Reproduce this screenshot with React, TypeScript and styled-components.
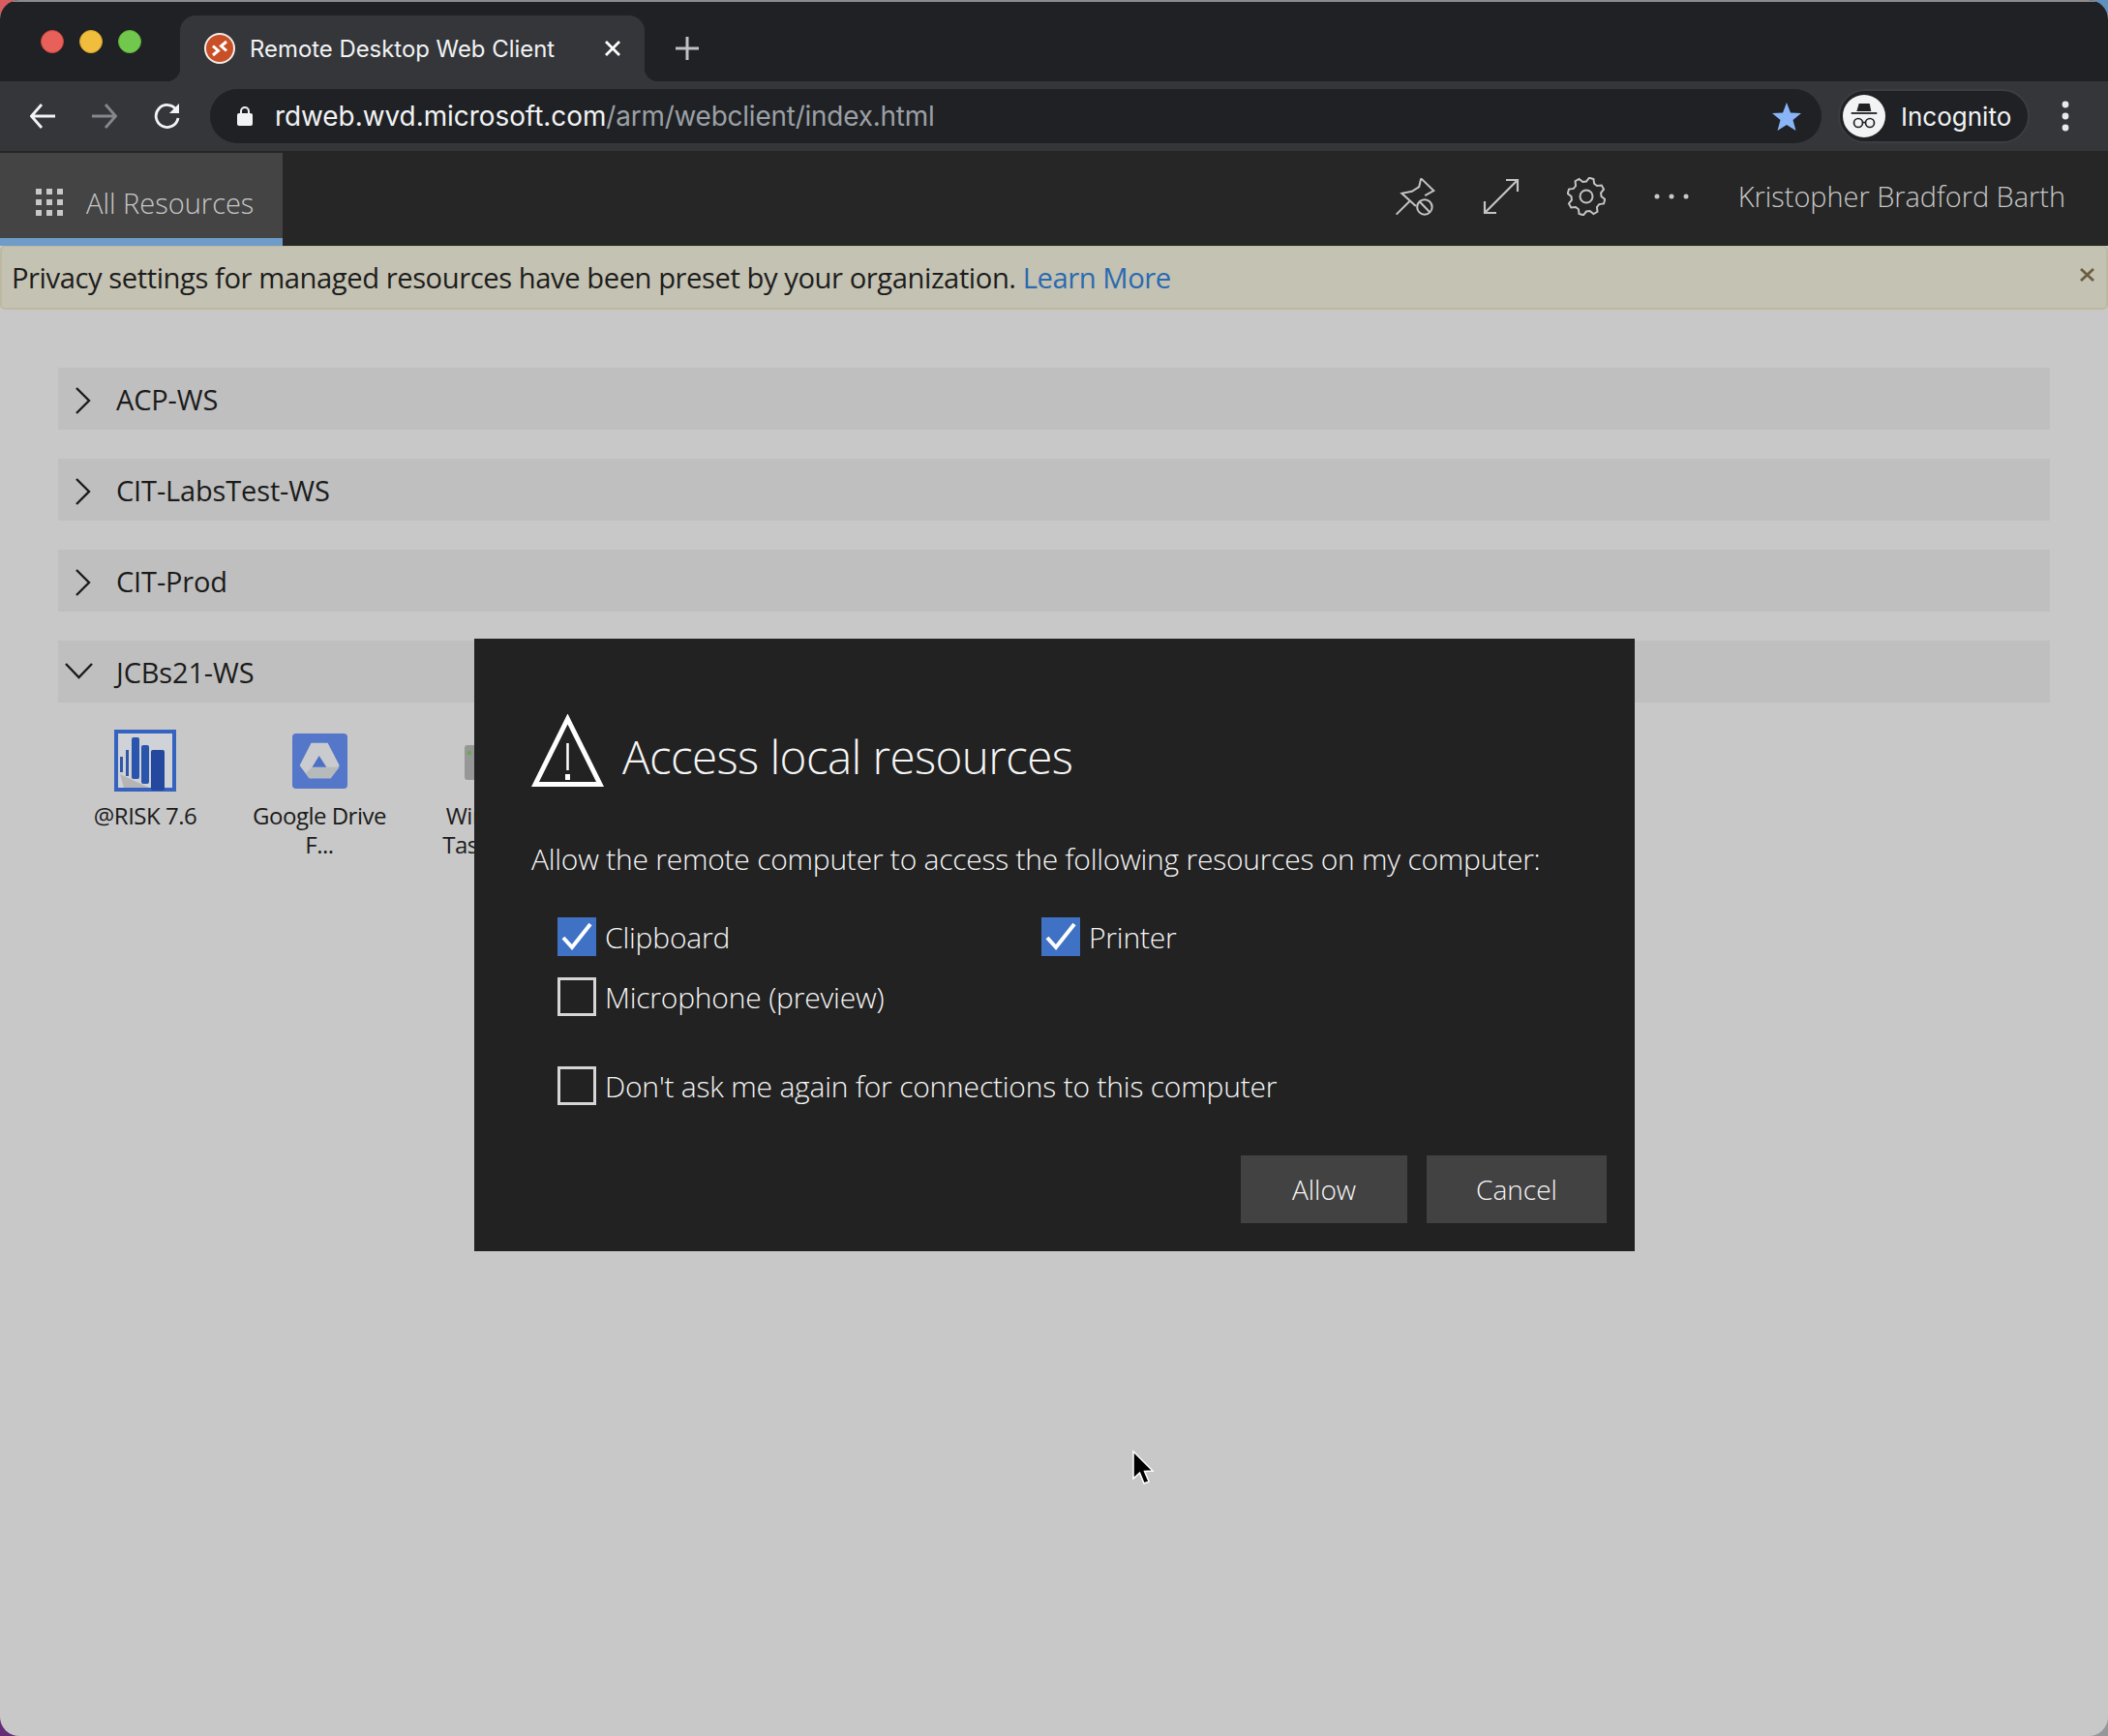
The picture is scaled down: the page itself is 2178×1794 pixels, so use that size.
import React from 'react';
import styled, { createGlobalStyle } from 'styled-components';

const Global = createGlobalStyle`
  html, body { margin: 0; padding: 0; width: 2178px; height: 1794px; overflow: hidden; }
  body { background: conic-gradient(from 45deg at 50% 50%, #5b8fc0 0deg, #999 90deg, #5e2a78 180deg, #e0605c 270deg, #5b8fc0 360deg); }
  * { box-sizing: border-box; }
`;

const segoe = `"Open Sans", "Noto Sans", sans-serif`;
const chrome = `Inter, Roboto, "Liberation Sans", sans-serif`;

const Window = styled.div`
  position: relative;
  width: 2178px;
  height: 1794px;
  border-radius: 20px;
  overflow: hidden;
  background: #c8c8c8;
  display: flex;
  flex-direction: column;
  font-family: ${segoe};
`;
const TitleBar = styled.div`
  height: 84px;
  flex: none;
  background: #202124;
  border-top: 2px solid #8b8b8d;
  display: flex;
  align-items: flex-end;
  padding-left: 42px;
`;
const Lights = styled.div`
  display: flex;
  gap: 16px;
  align-self: flex-start;
  margin-top: 29px;
  width: 144px;
`;
const Light = styled.span<{ $c: string; $e: string }>`
  width: 24px;
  height: 24px;
  border-radius: 50%;
  background: ${p => p.$c};
  border: 1px solid ${p => p.$e};
`;
const Tab = styled.div`
  position: relative;
  width: 480px;
  height: 68px;
  background: #35363a;
  border-radius: 16px 16px 0 0;
  display: flex;
  align-items: center;
  padding: 0 24px 0 25px;
  color: #f1f3f4;
  font-family: ${chrome};
  font-size: 23.9px;
  &::before, &::after {
    content: '';
    position: absolute;
    bottom: 0;
    width: 14px;
    height: 14px;
  }
  &::before { left: -14px; background: radial-gradient(circle at 0 0, transparent 14px, #35363a 14.5px); }
  &::after { right: -14px; background: radial-gradient(circle at 100% 0, transparent 14px, #35363a 14.5px); }
`;
const TabTitle = styled.span`
  margin-left: 15px;
  flex: 1;
  white-space: nowrap;
`;
const NewTab = styled.svg`
  align-self: center;
  margin: 14px 0 0 32px;
`;
const Toolbar = styled.div`
  height: 72px;
  flex: none;
  background: #35363a;
  display: flex;
  align-items: center;
  padding-left: 31px;
`;
const NavIcon = styled.svg<{ $gap: number }>`
  flex: none;
  margin-right: ${p => p.$gap}px;
`;
const Omnibox = styled.div`
  width: 1665px;
  height: 56px;
  border-radius: 28px;
  background: #202124;
  display: flex;
  align-items: center;
  padding: 0 21px 0 27px;
  font-family: ${chrome};
  font-size: 27.9px;
`;
const Host = styled.span`
  color: #f1f3f4;
  margin-left: 22px;
  letter-spacing: -0.02px;
`;
const UrlPath = styled.span`
  color: #9aa0a6;
  flex: 1;
  letter-spacing: -0.2px;
`;
const Profile = styled.div`
  margin-left: 17px;
  width: 198px;
  height: 56px;
  border-radius: 28px;
  background: #202124;
  border: 2px solid #3c3d42;
  display: flex;
  align-items: center;
  padding-left: 3px;
  gap: 16px;
  color: #f1f3f4;
  font-family: ${chrome};
  font-size: 26px;
`;
const Kebab = styled.svg`
  margin-left: 33px;
`;
const AppHeader = styled.header`
  height: 98px;
  flex: none;
  background: #262626;
  display: flex;
  align-items: flex-end;
  padding-right: 44px;
`;
const ResourcesTab = styled.div`
  width: 292px;
  height: 96px;
  background: #444444;
  border-bottom: 8px solid #6f9bc8;
  display: flex;
  align-items: center;
  padding: 14px 0 0 37px;
  gap: 24px;
  color: #c8c8c8;
  font-size: 29px;
  font-weight: 300;
`;
const HeaderRight = styled.div`
  margin-left: auto;
  align-self: center;
  display: flex;
  align-items: center;
  color: #c8c8c8;
  font-size: 28.9px;
  font-weight: 300;
  margin-top: -5px;
`;
const UserName = styled.span`
  margin-left: 51px;
  white-space: nowrap;
`;
const HeaderIcon = styled.svg<{ $gap: number }>`
  flex: none;
  margin-right: ${p => p.$gap}px;
`;
const Banner = styled.div`
  height: 66px;
  flex: none;
  background: #c4c2b2;
  border: 2px solid #bdb9a0;
  border-top-width: 1px;
  border-radius: 5px;
  display: flex;
  align-items: center;
  padding: 0 12px 0 10px;
  font-size: 29.2px;
  font-weight: 400;
  color: #1d1d1d;
`;
const BannerText = styled.span`
  flex: 1;
  letter-spacing: -0.44px;
`;
const LearnMore = styled.span`
  color: #2a6ab0;
`;
const CloseGlyph = styled.svg`
  margin-top: -6px;
`;
const Content = styled.main`
  padding: 60px 60px 0;
  display: flex;
  flex-direction: column;
  gap: 30px;
`;
const GroupHeader = styled.div`
  height: 64px;
  background: #bfbfbf;
  display: flex;
  align-items: center;
  color: #1b1b1b;
  font-size: 29px;
  font-weight: 400;
  letter-spacing: ${'-0.15px'};
`;
const Chevron = styled.svg`
  width: 60px;
  flex: none;
  margin-top: 3px;
`;
const AppGrid = styled.div`
  display: flex;
  margin-top: -2px;
`;
const AppItem = styled.div`
  width: 180px;
  display: flex;
  flex-direction: column;
  align-items: center;
`;
const AppIconBox = styled.div`
  height: 64px;
  display: flex;
  align-items: center;
  justify-content: center;
`;
const AppLabel = styled.div`
  margin-top: 10px;
  width: 160px;
  text-align: center;
  font-size: 24px;
  line-height: 30px;
  color: #1b1b1b;
  letter-spacing: -0.5px;
`;
const Dialog = styled.div`
  position: absolute;
  left: 490px;
  top: 660px;
  width: 1199px;
  height: 633px;
  background: #222222;
  padding: 78px 29px 0 59px;
  color: #f6f6f6;
  display: flex;
  flex-direction: column;
`;
const DialogTitleRow = styled.div`
  display: flex;
  align-items: center;
  gap: 19px;
  height: 75px;
`;
const DialogTitle = styled.h2`
  margin: 0;
  padding-top: 11px;
  font-size: 47.6px;
  font-weight: 350;
  letter-spacing: -0.6px;
`;
const DialogText = styled.p`
  margin: 55px 0 0;
  line-height: 40px;
  font-size: 30px;
  font-weight: 350;
  letter-spacing: -0.24px;
  white-space: nowrap;
`;
const Options = styled.div`
  margin: 40px 0 0 27px;
  display: grid;
  grid-template-columns: 500px 1fr;
  row-gap: 22px;
`;
const Option = styled.label<{ $top?: number }>`
  display: flex;
  align-items: center;
  gap: 9px;
  height: 40px;
  font-size: 30px;
  font-weight: 350;
  letter-spacing: -0.2px;
  white-space: nowrap;
  ${p => (p.$top ? `margin: ${p.$top}px 0 0 27px;` : '')}
`;
const Box = styled.span<{ $on?: boolean }>`
  width: 40px;
  height: 40px;
  flex: none;
  display: flex;
  align-items: center;
  justify-content: center;
  background: ${p => (p.$on ? '#3f72c4' : 'transparent')};
  border: ${p => (p.$on ? 'none' : '3px solid #d6d6d6')};
`;
const Actions = styled.div`
  margin-top: 52px;
  display: flex;
  justify-content: flex-end;
  gap: 20px;
`;
const Button = styled.button<{ $w: number }>`
  width: ${p => p.$w}px;
  height: 70px;
  border: none;
  background: #424242;
  color: #f6f6f6;
  font-family: ${segoe};
  font-size: 28px;
  font-weight: 350;
`;
const Cursor = styled.svg`
  position: absolute;
  left: 1168px;
  top: 1498px;
`;

const gearPath = (() => {
  const pts: string[] = [];
  const n = 8;
  for (let i = 0; i < n; i++) {
    const a = (i / n) * Math.PI * 2 + Math.PI / 8;
    const step = (Math.PI * 2) / n;
    [[15.5, -0.5], [19.5, -0.3], [19.5, 0.0], [15.5, 0.2]].forEach(([r, f]) => {
      const t = a + f * step;
      pts.push(`${(20 + r * Math.cos(t)).toFixed(2)} ${(20 + r * Math.sin(t)).toFixed(2)}`);
    });
  }
  return 'M' + pts.join('L') + 'Z';
})();

const ChevronRight = () => (
  <Chevron height="32" viewBox="0 0 60 32">
    <path d="M19 3L32 16L19 29" fill="none" stroke="#1b1b1b" strokeWidth="2.4" />
  </Chevron>
);
const ChevronDown = () => (
  <Chevron height="32" viewBox="0 0 60 32">
    <path d="M8 6L21.500 20L35 6" fill="none" stroke="#1b1b1b" strokeWidth="2.4" />
  </Chevron>
);
const Check = () => (
  <svg width="34" height="30" viewBox="0 0 34 30">
    <path d="M3 16L12 26L31 2" fill="none" stroke="#fff" strokeWidth="4" />
  </svg>
);

const groups = ['ACP-WS', 'CIT-LabsTest-WS', 'CIT-Prod'];

export default function App() {
  return (
    <>
      <Global />
      <Window>
        <TitleBar>
          <Lights>
            <Light $c="#e8605a" $e="#c9453f" />
            <Light $c="#f0bd3d" $e="#d7a12c" />
            <Light $c="#72c84c" $e="#5fb13c" />
          </Lights>
          <Tab>
            <svg width="32" height="32" viewBox="0 0 32 32">
              <circle cx="16" cy="16" r="15" fill="#c94f27" stroke="#f3ece8" strokeWidth="2" />
              <path d="M9 13.500L14.500 18.500L9 23M23 9L17.500 13.500L23 18.500" fill="none" stroke="#fff" strokeWidth="3" />
            </svg>
            <TabTitle>Remote Desktop Web Client</TabTitle>
            <svg width="18" height="16" viewBox="0 0 18 16">
              <path d="M2 1L16 15M16 1L2 15" stroke="#fff" strokeWidth="2.800" />
            </svg>
          </Tab>
          <NewTab width="24" height="24" viewBox="0 0 24 24">
            <path d="M12 0V24M0 12H24" stroke="#bdc1c6" strokeWidth="3" />
          </NewTab>
        </TitleBar>
        <Toolbar>
          <NavIcon $gap={38} width="26" height="26" viewBox="0 0 26 26">
            <path d="M12 1L1.500 13L12 25M2 13H26" fill="none" stroke="#f1f3f4" strokeWidth="2.800" />
          </NavIcon>
          <NavIcon $gap={38} width="26" height="26" viewBox="0 0 26 26">
            <path d="M14 1L24.500 13L14 25M24 13H0" fill="none" stroke="#84878b" strokeWidth="2.800" />
          </NavIcon>
          <NavIcon $gap={30} width="28" height="28" viewBox="0 0 28 28">
            <path d="M23.500 8A11.500 11.500 0 1 0 25 16" fill="none" stroke="#f1f3f4" strokeWidth="2.800" />
            <path d="M26 1V11H16Z" fill="#f1f3f4" />
          </NavIcon>
          <Omnibox>
            <svg width="18" height="22" viewBox="0 0 18 22">
              <path d="M5 9V6a4 4 0 0 1 8 0V9" fill="none" stroke="#f1f3f4" strokeWidth="2" />
              <rect x="1" y="8" width="16" height="13" rx="2" fill="#f1f3f4" />
            </svg>
            <Host>rdweb.wvd.microsoft.com</Host>
            <UrlPath>/arm/webclient/index.html</UrlPath>
            <svg width="30" height="29" viewBox="0 0 30 29">
              <path d="M15 0L19 10.500L30 11L21.500 18L24.500 29L15 23L5.500 29L8.500 18L0 11L11 10.500Z" fill="#8ab4f8" />
            </svg>
          </Omnibox>
          <Profile>
            <svg width="44" height="44" viewBox="0 0 44 44">
              <circle cx="22" cy="22" r="22" fill="#f1f3f4" />
              <path d="M16.700 9H27.700L29.300 17H14.300Z" fill="#202124" />
              <path d="M8.700 19H35.300" stroke="#202124" strokeWidth="1.800" />
              <circle cx="16" cy="29" r="4.500" fill="none" stroke="#202124" strokeWidth="1.700" />
              <circle cx="28" cy="29" r="4.500" fill="none" stroke="#202124" strokeWidth="1.700" />
              <path d="M20.500 28.500H23.500" stroke="#202124" strokeWidth="1.500" />
            </svg>
            Incognito
          </Profile>
          <Kebab width="8" height="32" viewBox="0 0 8 32">
            <circle cx="4" cy="4" r="3.400" fill="#e8eaed" />
            <circle cx="4" cy="16" r="3.400" fill="#e8eaed" />
            <circle cx="4" cy="28" r="3.400" fill="#e8eaed" />
          </Kebab>
        </Toolbar>
        <AppHeader>
          <ResourcesTab>
            <svg width="28" height="28" viewBox="0 0 28 28">
              {[0, 11, 22].flatMap(y =>
                [0, 11, 22].map(x => <rect key={`${x}-${y}`} x={x} y={y} width="6" height="6" fill="#c8c8c8" />)
              )}
            </svg>
            All Resources
          </ResourcesTab>
          <HeaderRight>
            <HeaderIcon $gap={49} width="42" height="42" viewBox="35 35 125 125">
              <path d="M116 42L155 80L128 95M116 42L110 68L88 82L57 88L100 127M40 153L80 113" fill="none" stroke="#c4c4c4" strokeWidth="6" />
              <circle cx="127" cy="130" r="23" fill="none" stroke="#c4c4c4" strokeWidth="6" />
              <path d="M112 114L143 146" stroke="#c4c4c4" strokeWidth="6" />
            </HeaderIcon>
            <HeaderIcon $gap={49} width="38" height="38" viewBox="0 0 38 38">
              <path d="M2 36L36 2M24 2H36V14M2 24V36H14" fill="none" stroke="#c4c4c4" strokeWidth="2.200" />
            </HeaderIcon>
            <HeaderIcon $gap={50} width="40" height="40" viewBox="0 0 40 40">
              <path d={gearPath} fill="none" stroke="#c4c4c4" strokeWidth="2" />
              <circle cx="20" cy="20" r="6.500" fill="none" stroke="#c4c4c4" strokeWidth="2" />
            </HeaderIcon>
            <svg width="36" height="6" viewBox="0 0 36 6">
              <circle cx="3" cy="3" r="2.500" fill="#c8c8c8" />
              <circle cx="18" cy="3" r="2.500" fill="#c8c8c8" />
              <circle cx="33" cy="3" r="2.500" fill="#c8c8c8" />
            </svg>
            <UserName>Kristopher Bradford Barth</UserName>
          </HeaderRight>
        </AppHeader>
        <Banner>
          <BannerText>
            Privacy settings for managed resources have been preset by your organization. <LearnMore>Learn More</LearnMore>
          </BannerText>
          <CloseGlyph width="15" height="14" viewBox="0 0 15 14">
            <path d="M1 1L14 13M14 1L1 13" stroke="#6b5f42" strokeWidth="2.800" />
          </CloseGlyph>
        </Banner>
        <Content>
          {groups.map(g => (
            <GroupHeader key={g}>
              <ChevronRight />
              {g}
            </GroupHeader>
          ))}
          <GroupHeader>
            <ChevronDown />
            JCBs21-WS
          </GroupHeader>
          <AppGrid>
            <AppItem>
              <AppIconBox>
                <svg width="64" height="64" viewBox="0 0 64 64">
                  <rect width="64" height="64" fill="#3563bf" />
                  <rect x="4" y="4" width="56" height="56" fill="#cfd2d6" />
                  <path d="M6 46L36 60H10Z" fill="#b5b5b5" />
                  <rect x="6" y="28" width="3" height="16" fill="#3158a8" />
                  <rect x="12" y="21" width="3" height="27" fill="#3158a8" />
                  <rect x="18" y="8" width="8" height="43" rx="2" fill="#2a55ac" />
                  <rect x="28" y="16" width="8" height="40" rx="2" fill="#2a55ac" />
                  <rect x="38" y="21" width="14" height="42" rx="2" fill="#23489e" />
                </svg>
              </AppIconBox>
              <AppLabel>@RISK 7.6</AppLabel>
            </AppItem>
            <AppItem>
              <AppIconBox>
                <svg width="57" height="57" viewBox="0 0 57 57">
                  <rect width="57" height="57" rx="4" fill="#5577c9" />
                  <path d="M19.600 9.700H36.600L48.700 33L39.700 46.300H17.400L7.600 33Z" fill="#c9cbce" />
                  <path d="M20.500 34.700H48.700L39.700 46.300H17.400L14 41Z" fill="#b7babd" />
                  <path d="M27.700 23L35.300 34.700H20.500Z" fill="#4c70c8" />
                </svg>
              </AppIconBox>
              <AppLabel>
                Google Drive
                <br />
                F...
              </AppLabel>
            </AppItem>
            <AppItem>
              <AppIconBox>
                <svg width="64" height="64" viewBox="0 0 64 64">
                  <rect x="2" y="16" width="12" height="36" rx="3" fill="#979797" />
                  <rect x="5" y="22" width="4" height="4" fill="#6aa84f" />
                </svg>
              </AppIconBox>
              <AppLabel>
                Windows
                <br />
                Task Ma...
              </AppLabel>
            </AppItem>
          </AppGrid>
        </Content>
        <Dialog>
          <DialogTitleRow>
            <svg width="75" height="75" viewBox="0 0 75 75">
              <path d="M37.500 5L71 72.500H4Z" fill="none" stroke="#fff" strokeWidth="5" />
              <path d="M37.500 30V58" stroke="#fff" strokeWidth="2.500" />
              <rect x="35" y="62" width="5" height="6" fill="#fff" />
            </svg>
            <DialogTitle>Access local resources</DialogTitle>
          </DialogTitleRow>
          <DialogText>Allow the remote computer to access the following resources on my computer:</DialogText>
          <Options>
            <Option>
              <Box $on>
                <Check />
              </Box>
              Clipboard
            </Option>
            <Option>
              <Box $on>
                <Check />
              </Box>
              Printer
            </Option>
            <Option>
              <Box />
              Microphone (preview)
            </Option>
          </Options>
          <Option $top={52}>
            <Box />
            Don't ask me again for connections to this computer
          </Option>
          <Actions>
            <Button $w={172}>Allow</Button>
            <Button $w={186}>Cancel</Button>
          </Actions>
        </Dialog>
        <Cursor width="26" height="40" viewBox="0 0 26 40">
          <path d="M3 2V30L9.500 24L14 35L19 33L14.500 22.500L23 22Z" fill="#000" stroke="#fff" strokeWidth="1.500" />
        </Cursor>
      </Window>
    </>
  );
}
